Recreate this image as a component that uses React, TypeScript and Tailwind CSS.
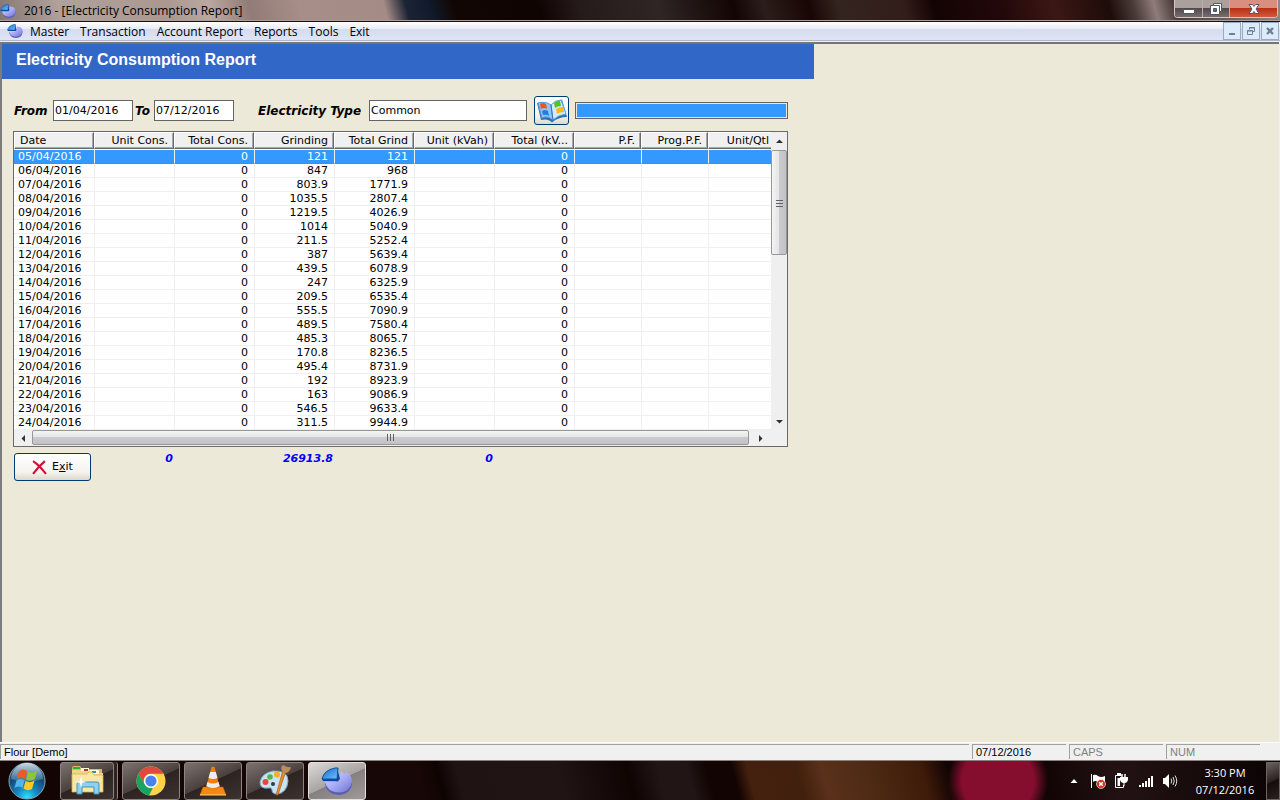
import React, { useState } from 'react';

type Row = [string, string, string];

const rows: Row[] = [
  ['05/04/2016', '121', '121'],
  ['06/04/2016', '847', '968'],
  ['07/04/2016', '803.9', '1771.9'],
  ['08/04/2016', '1035.5', '2807.4'],
  ['09/04/2016', '1219.5', '4026.9'],
  ['10/04/2016', '1014', '5040.9'],
  ['11/04/2016', '211.5', '5252.4'],
  ['12/04/2016', '387', '5639.4'],
  ['13/04/2016', '439.5', '6078.9'],
  ['14/04/2016', '247', '6325.9'],
  ['15/04/2016', '209.5', '6535.4'],
  ['16/04/2016', '555.5', '7090.9'],
  ['17/04/2016', '489.5', '7580.4'],
  ['18/04/2016', '485.3', '8065.7'],
  ['19/04/2016', '170.8', '8236.5'],
  ['20/04/2016', '495.4', '8731.9'],
  ['21/04/2016', '192', '8923.9'],
  ['22/04/2016', '163', '9086.9'],
  ['23/04/2016', '546.5', '9633.4'],
  ['24/04/2016', '311.5', '9944.9'],
];

const columns = [
  'Date',
  'Unit Cons.',
  'Total Cons.',
  'Grinding',
  'Total Grind',
  'Unit (kVah)',
  'Total (kV...',
  'P.F.',
  'Prog.P.F.',
  'Unit/Qtl',
];

const menuItems = ['Master', 'Transaction', 'Account Report', 'Reports', 'Tools', 'Exit'];

const PieIcon = ({ className }: { className: string }) => (
  <svg className={className} viewBox="0 0 32 32" aria-hidden="true">
    <defs>
      <linearGradient id="ball" x1="0" y1="0" x2="1" y2="1">
        <stop offset="0" stopColor="#d6d8ff" />
        <stop offset="0.5" stopColor="#a9adf5" />
        <stop offset="1" stopColor="#6c70cf" />
      </linearGradient>
      <linearGradient id="slice" x1="0" y1="0" x2="1" y2="1">
        <stop offset="0" stopColor="#1668c8" />
        <stop offset="1" stopColor="#6cc4ff" />
      </linearGradient>
    </defs>
    <path d="M21 8 Q31 10 31 19 Q30 29 18 30 Q5 29 4 18 L17 18 Z" fill="#5a5eb4" />
    <path d="M20 6 L24 9 L25 7 Q31 10 31 17 Q29 27 18 27.500 Q6 27 4 17 L17 17 Z" fill="url(#ball)" />
    <path d="M1 14 L2 16 L17 16 L19 14 L16 3 L14 13 Z" fill="#0e4796" />
    <path d="M1 14 Q3 5 14 3 L17 3 L16 14 Z" fill="url(#slice)" stroke="#124f9e" />
  </svg>
);

const BookIcon = () => (
  <svg className="h-6 w-8" viewBox="0 0 32 24" aria-hidden="true">
    <path d="M1 4 L5 21 Q12 19 16 23.500 Q22 18 31 18 L26 0.500 Q18 2 15 6 Q9 2 1 4Z" fill="#2d6fb4" />
    <path d="M2 4 Q10 2 15 6 L17 21 Q11 16 6 19 Z" fill="#8fc6f3" stroke="#4f9be0" />
    <path d="M15 6 Q19 1 25 1 L30 15 Q22 16 17 21 Z" fill="#d3ebfc" stroke="#5aa5e4" />
    <path d="M4 5 Q7 3 10 5 L11 10 Q8 8 5 10Z" fill="#f0541e" />
    <path d="M6 12 Q9 10 12 12 L13 17 Q10 15 7 16Z" fill="#1f7fe0" />
    <path d="M18 4 Q21 1 24 2 L25 7 Q21 7 19 9Z" fill="#56c41c" />
    <path d="M20 10 Q23 8 27 8 L28 13 Q24 13 21 15Z" fill="#fdb813" />
    <path d="M15 6 L17 21" stroke="#3177bd" fill="none" />
  </svg>
);

const StartOrb = () => (
  <svg className="h-[38px] w-[38px]" viewBox="0 0 38 38" aria-hidden="true">
    <defs>
      <radialGradient id="orb" cx="0.5" cy="0.95" r="0.95">
        <stop offset="0" stopColor="#2fe0ff" />
        <stop offset="0.3" stopColor="#1489c4" />
        <stop offset="0.65" stopColor="#124a78" />
        <stop offset="1" stopColor="#24506e" />
      </radialGradient>
      <linearGradient id="orbGloss" x1="0" y1="0" x2="0" y2="1">
        <stop offset="0" stopColor="#e8f3fa" stopOpacity="0.85" />
        <stop offset="1" stopColor="#a5c8dc" stopOpacity="0.25" />
      </linearGradient>
    </defs>
    <circle cx="19" cy="19" r="18" fill="url(#orb)" stroke="#8ba6b6" />
    <path d="M3 17 A16 16 0 0 1 35 17 Q19 22 3 17Z" fill="url(#orbGloss)" />
    <path d="M11 9 Q15 6 19 9 L17 17 Q13 14 9 17Z" fill="#ee5a24" />
    <path d="M20 9.500 Q24 12 29 9 L27 17 Q22 20 18 17.500Z" fill="#8cc63e" />
    <path d="M8.500 18.500 Q12 15.500 16.500 18.500 L14.500 26 Q11 23 6.500 26Z" fill="#53b4ee" />
    <path d="M17.500 19 Q22 21.500 26.500 18.500 L24 27 Q20 29.500 15.500 26.500Z" fill="#ffc928" />
  </svg>
);

const ExplorerIcon = () => (
  <svg className="h-8 w-9" viewBox="0 0 36 32" aria-hidden="true">
    <path d="M3 3 Q3 1 5 1 H11 L13 4 H33 V24 H3Z" fill="#dcb95a" />
    <path d="M4 2 H11 V4 H4Z" fill="#1eb53a" />
    <path d="M3 5 H29 V8 H34 V27 H3Z" fill="#f0d582" />
    <path d="M12 3 H20 V6 H12Z" fill="#fff8dd" />
    <path d="M15 4 H19 V6 H15Z" fill="#c63222" />
    <path d="M21 5 H30 V9 H21Z" fill="#fff8dd" />
    <path d="M23 6 H27 V8 H23Z" fill="#1c8fd8" />
    <path d="M3 9 H18 L20 7 H23 L25 10 H34 V27 H3Z" fill="#f8e7a4" stroke="#d5b455" strokeWidth="0.800" />
    <path d="M8 29 V19 Q8 17 10 17 H28 Q30 17 30 19 V29 H25 V22 H13 V29Z" fill="#8fd0ee" stroke="#3f93c4" />
    <path d="M12 11 L13 16 L18 17 L13 18 L12 23 L11 18 L6 17 L11 16Z" fill="#fff" />
  </svg>
);

const ChromeIcon = () => (
  <svg className="h-[30px] w-[30px]" viewBox="0 0 30 30" aria-hidden="true">
    <circle cx="15" cy="15" r="14.500" fill="#ffd24a" />
    <path d="M2.400 7.800 A14.500 14.500 0 0 1 27.600 7.800 H15 A7 7 0 0 0 8.800 18.500Z" fill="#de4b3c" />
    <path d="M2.400 7.800 L8.900 18.600 A7 7 0 0 0 17 21.700 L13 29.400 A14.500 14.500 0 0 1 2.400 7.800Z" fill="#1ca261" />
    <circle cx="15" cy="15" r="7" fill="#fff" />
    <circle cx="15" cy="15" r="5.600" fill="#4a80f0" />
  </svg>
);

const VlcIcon = () => (
  <svg className="h-[30px] w-[28px]" viewBox="0 0 28 30" aria-hidden="true">
    <path d="M4 21 H24 L27 29 H1Z" fill="#f58a12" stroke="#c85f00" strokeWidth="0.600" />
    <path d="M12.500 1 Q14 0 15.500 1 L21 22 Q14 27 7 22Z" fill="#f47b0c" />
    <path d="M11.200 6 H16.800 L18.500 12 Q14 14 9.500 12Z" fill="#e9edf2" />
    <path d="M8.500 16 Q14 19 19.500 16 L20.700 20 Q14 24 7.300 20Z" fill="#e9edf2" />
    <path d="M1 28 H27 V29.500 H1Z" fill="#ffae45" />
  </svg>
);

const PaintIcon = () => (
  <svg className="h-8 w-8" viewBox="0 0 32 32" aria-hidden="true">
    <path
      d="M14 6 Q29 5 29 16 Q28 28 18 29 Q13 29 13 25 Q13 22 9 23 Q1 24 1 17 Q3 8 14 6Z"
      fill="#c9e2f4"
      stroke="#7fa9c8"
    />
    <circle cx="6.500" cy="17" r="3" fill="#e3483c" />
    <circle cx="11" cy="12" r="2.800" fill="#4db848" />
    <circle cx="18" cy="9.500" r="3" fill="#f5b120" />
    <circle cx="14" cy="19" r="2" fill="#26404f" />
    <path d="M27 6 L19 30 L17 30 L24 5Z" fill="#e08a28" stroke="#a75c12" strokeWidth="0.600" />
    <path d="M23 6 Q21 2 24 0 Q29 3 32 2 Q31 7 27 8Z" fill="#b98d5c" />
  </svg>
);

const Arrow = ({ d }: { d: string }) => (
  <svg className="h-[7px] w-[7px]" viewBox="0 0 7 7" aria-hidden="true">
    <path d={d} fill="#303030" />
  </svg>
);

const TitleBar = () => (
  <div className="flex h-[22px] shrink-0 items-start border-b border-[#1c1010] bg-[linear-gradient(75deg,#857773_0px,#b0a19b_60px,#ab9890_167px,#bba89f_206px,#927c77_244px,#a78e88_293px,#a58b86_375px,#1b2434_396px,#101b2c_418px,#120604_442px,#100403_524px,#251b1a_563px,#2e2524_640px,#130503_712px,#2b1d1b_742px,#180604_785px,#34241f_814px,#321d1a_877px,#130403_906px,#22080a_969px,#3b1714_1022px,#1d0c09_1075px,#4b3b39_1099px,#8e7d7a_1119px,#4a3c3a_1138px,#938583_1240px)] shadow-[inset_0_-1px_0_#a99c99]">
    <div className="flex h-[21px] min-w-0 flex-1 items-center">
      <PieIcon className="h-4 w-4 shrink-0" />
      <h1 className="ml-2 text-[12px] whitespace-nowrap text-black">2016 - [Electricity Consumption Report]</h1>
    </div>
    <div className="mr-[2px] flex h-[18px] shrink-0 overflow-hidden rounded-b-[4px] border border-t-0 border-[#d0c8c6] bg-[#2b2321]">
      <button
        aria-label="Minimize"
        className="flex w-[28px] items-center justify-center border-r border-[#b9b1af] bg-[linear-gradient(#aaa19f_0_45%,#50464a_45%,#776d6b)]"
      >
        <svg className="h-3 w-3" viewBox="0 0 12 12">
          <path d="M0.500 6.500 h11 v4 h-11z" fill="#fff" stroke="#50546e" />
        </svg>
      </button>
      <button
        aria-label="Restore"
        className="flex w-[27px] items-center justify-center border-r border-[#b9b1af] bg-[linear-gradient(#aaa19f_0_45%,#50464a_45%,#776d6b)]"
      >
        <svg className="h-3 w-3" viewBox="0 0 12 12">
          <path d="M3.500 0.500 h8 v8 h-2 v3 h-9 v-9 h3z" fill="#fff" stroke="#50546e" />
          <path d="M3.500 5.500 h3 v3 h-3z" fill="#6d6468" stroke="#50546e" />
          <path d="M3 2.500 h6.500 v6" fill="none" stroke="#50546e" />
        </svg>
      </button>
      <button
        aria-label="Close"
        className="flex w-[47px] items-center justify-center bg-[linear-gradient(#d88f80_0_45%,#b52d12_45%,#d5583a)]"
      >
        <svg className="h-3 w-3" viewBox="0 0 12 12">
          <path
            d="M1 1.500 h3.500 L6 3.500 7.500 1.500 H11 L8 6 11 10.500 H7.500 L6 8.500 4.500 10.500 H1 L4 6Z"
            fill="#fff"
            stroke="#50546e"
          />
        </svg>
      </button>
    </div>
  </div>
);

const childButton =
  'flex h-[18px] w-[18px] items-center justify-center border border-[#9aabc0] bg-[#dcebfa]';

const MenuBar = () => (
  <nav className="flex h-[19px] shrink-0 items-center border-b border-[#b0b6cc] bg-[linear-gradient(#ffffff,#e8ebf5_7px,#d5dcef_7px,#dfe4f6)]">
    <PieIcon className="ml-[7px] h-4 w-4 shrink-0" />
    <ul className="ml-[2px] flex flex-1 pt-[2px] text-[12px] leading-4 text-black">
      {menuItems.map((item) => (
        <li key={item}>
          <button className="pr-[6px] pl-[5px] whitespace-nowrap">{item}</button>
        </li>
      ))}
    </ul>
    <div className="mr-px flex gap-px">
      <button aria-label="Minimize child window" className={childButton}>
        <svg className="h-2 w-2" viewBox="0 0 8 8">
          <path d="M1 6 h6 v2 h-6z" fill="#6f8295" />
        </svg>
      </button>
      <button aria-label="Restore child window" className={childButton}>
        <svg className="h-2 w-2" viewBox="0 0 8 8">
          <path d="M2.500 2.500 V0.500 H7.500 V4.500 H6 M0.500 3.500 h5 v4 h-5z M2 1 h6 M0 4 h6" fill="none" stroke="#6f8295" />
        </svg>
      </button>
      <button aria-label="Close child window" className={childButton}>
        <svg className="h-2 w-2" viewBox="0 0 8 8">
          <path d="M1 1 L7 7 M7 1 L1 7" stroke="#6f8295" strokeWidth="2.400" />
        </svg>
      </button>
    </div>
  </nav>
);

const ReportTable = () => {
  const [selected, setSelected] = useState(0);

  return (
    <div className="w-[775px] max-w-full border border-[#696969] bg-[#f0f0f0] text-[11px] text-black">
      <div className="flex">
        <div className="min-w-0 flex-1 overflow-hidden bg-white">
          <table className="w-[761px] table-fixed border-separate border-spacing-0">
            <colgroup>
              {columns.map((name, i) => (
                <col key={name} className={i < 7 ? 'w-[80px]' : 'w-[67px]'} />
              ))}
            </colgroup>
            <thead>
              <tr>
                {columns.map((name, i) => (
                  <th key={name} className="h-[18px] p-0 align-top font-normal">
                    <span
                      className={`block h-[17px] overflow-hidden border-t border-r border-b border-l border-t-white border-r-[#696969] border-b-[#696969] border-l-white bg-[#f0f0f0] leading-[16px] whitespace-nowrap shadow-[inset_-1px_-1px_0_#a8a8a8] ${
                        i === 0 ? 'pl-[5px] text-left' : 'pr-[5px] text-right'
                      }`}
                    >
                      {name}
                    </span>
                  </th>
                ))}
              </tr>
            </thead>
            <tbody>
              {rows.map(([date, grinding, total], r) => {
                const cells = [date, '', '0', grinding, total, '', '0', '', '', ''];
                return (
                  <tr
                    key={date}
                    onClick={() => setSelected(r)}
                    className={r === selected ? 'bg-[#3399ff] text-white' : 'bg-white'}
                  >
                    {cells.map((cell, i) => (
                      <td
                        key={columns[i]}
                        className={`h-[14px] border-b py-0 leading-[13px] ${
                          r === selected ? 'border-b-[#c8642e] [border-bottom-style:dotted]' : 'border-b-[#f0f0f0]'
                        } ${
                          i === 0 ? 'pr-0 pl-1 text-left' : 'border-l border-l-[#f0f0f0] pr-[6px] pl-0 text-right'
                        }`}
                      >
                        {cell}
                      </td>
                    ))}
                  </tr>
                );
              })}
            </tbody>
          </table>
        </div>
        <div className="flex w-4 shrink-0 flex-col bg-[#efefef]">
          <button aria-label="Scroll up" className="flex h-[18px] items-center justify-center">
            <Arrow d="M0 5 L3.500 1.500 L7 5Z" />
          </button>
          <div className="flex h-[105px] items-center justify-center rounded-[2px] border border-[#979797] bg-[linear-gradient(90deg,#f4f4f4,#e4e4e5_50%,#cbcbcd_50%,#c2c2c5)]">
            <svg className="h-[8px] w-[7px]" viewBox="0 0 7 8">
              <path d="M0 1.500 h7 M0 4.500 h7 M0 7.500 h7" stroke="#606060" />
            </svg>
          </div>
          <div className="flex-1" />
          <button aria-label="Scroll down" className="flex h-[18px] items-center justify-center">
            <Arrow d="M0 2 L3.500 5.500 L7 2Z" />
          </button>
        </div>
      </div>
      <div className="flex h-4 items-stretch pr-4">
        <button aria-label="Scroll left" className="flex w-[18px] items-center justify-center">
          <Arrow d="M5 0 L1.500 3.500 L5 7Z" />
        </button>
        <div className="mb-px flex flex-1 items-center justify-center rounded-[2px] border border-[#979797] bg-[linear-gradient(#f4f4f4,#e4e4e5_50%,#cbcbcd_50%,#c2c2c5)]">
          <svg className="h-[7px] w-[8px]" viewBox="0 0 8 7">
            <path d="M0.500 0 v7 M3.500 0 v7 M6.500 0 v7" stroke="#606060" />
          </svg>
        </div>
        <button aria-label="Scroll right" className="flex w-[22px] items-center justify-center">
          <Arrow d="M2 0 L5.500 3.500 L2 7Z" />
        </button>
      </div>
    </div>
  );
};

const field = 'h-[21px] border border-[#646464] bg-white text-[11px] text-black outline-none';
const label = 'text-[12px] font-bold italic whitespace-nowrap text-black';
const total = 'text-right text-[11px] leading-[11px] font-bold italic text-[#0000ff]';

const ReportForm = () => (
  <main className="min-h-0 flex-1 overflow-hidden border-t-2 border-l-2 border-t-[#757575] border-l-[#7c7c7c] bg-[#ece9d8] font-['DejaVu_Sans',Verdana,sans-serif]">
    <h2 className="h-[35px] w-[812px] max-w-full bg-[#3168c8] pl-[14px] font-['Liberation_Sans',Arial,sans-serif] text-[16px] leading-8 font-bold text-white">
      Electricity Consumption Report
    </h2>
    <div className="flex flex-col items-start gap-[6px] pt-[17px] pl-[11px]">
      <form className="flex items-center pl-px" onSubmit={(e) => e.preventDefault()}>
        <label htmlFor="from" className={`w-[39px] ${label}`}>
          From
        </label>
        <input id="from" defaultValue="01/04/2016" className={`w-[80px] pl-px ${field}`} />
        <label htmlFor="to" className={`w-[21px] pl-[2px] ${label}`}>
          To
        </label>
        <input id="to" defaultValue="07/12/2016" className={`w-[80px] pl-px ${field}`} />
        <label htmlFor="type" className={`ml-6 w-[111px] ${label}`}>
          Electricity Type
        </label>
        <input id="type" defaultValue="Common" className={`w-[158px] pl-px ${field}`} />
        <button
          aria-label="Show report"
          className="ml-[7px] flex h-[29px] w-[35px] items-center justify-center rounded-[3px] border border-[#003c74] bg-[linear-gradient(#ffffff,#f4f3ee_70%,#dcd8cc)]"
        >
          <BookIcon />
        </button>
        <div className="ml-[6px] h-[17px] w-[213px] border border-[#646464] bg-[#ece9d8] p-px">
          <div className="h-full bg-[#3399ff]" />
        </div>
      </form>
      <ReportTable />
      <div className="flex items-start pl-px">
        <button className="flex h-[28px] w-[77px] items-center justify-center gap-[5px] rounded-[3px] border border-[#003c74] bg-[linear-gradient(#ffffff,#f4f3ee_70%,#dcd8cc)] text-[11px] text-black">
          <svg className="h-[15px] w-[15px]" viewBox="0 0 14 14" aria-hidden="true">
            <path d="M1 1 Q7 5 13 13 M12 1 Q6 6 1 13" fill="none" stroke="#d0103a" strokeWidth="2" />
          </svg>
          <span>
            E<u>x</u>it
          </span>
        </button>
        <output className={`w-[82px] ${total}`}>0</output>
        <output className={`w-[160px] ${total}`}>26913.8</output>
        <output className={`w-[160px] ${total}`}>0</output>
      </div>
    </div>
  </main>
);

const pane = 'h-[15px] border-t border-l border-[#a0a0a0] pl-[3px] leading-[14px] whitespace-nowrap';

const StatusBar = () => (
  <footer className="flex h-[18px] shrink-0 items-end gap-[3px] border-t border-[#fafafa] bg-[#f0f0f0] pr-5 pb-px font-['Liberation_Sans',Arial,sans-serif] text-[11px] text-black">
    <div className={`min-w-0 flex-1 ${pane}`}>Flour [Demo]</div>
    <div className={`w-[94px] ${pane}`}>07/12/2016</div>
    <div className={`w-[94px] text-[#808080] ${pane}`}>CAPS</div>
    <div className={`w-[94px] text-[#808080] ${pane}`}>NUM</div>
  </footer>
);

const task =
  'flex h-[38px] w-[58px] items-center justify-center rounded-[3px] border border-[#8d8381] bg-[linear-gradient(155deg,#7c7371,#4a403e_50%,#2d2321_51%,#3c3230)]';

const TaskBar = () => (
  <div className="flex h-10 shrink-0 items-center border-t border-[#8a8280] bg-[radial-gradient(circle_at_998px_20px,#850d2e_0px,#850d2e_36px,transparent_50px),linear-gradient(75deg,#120504_0px,#170807_411px,#0f0302_430px,#1f1413_449px,#201514_546px,#100403_614px,#211615_643px,#211615_672px,#110403_691px,#110403_715px,#45200e_730px,#41200d_778px,#5a311b_802px,#4b2812_855px,#3e1a09_899px,#130505_923px,#130505_1019px,#221213_1087px,#0b0304_1241px)] font-['Open_Sans','Segoe_UI',sans-serif]">
    <button aria-label="Start" className="ml-2">
      <StartOrb />
    </button>
    <div className="ml-[14px] flex flex-1 gap-1">
      <button aria-label="Windows Explorer" className="flex h-[38px] w-[58px] rounded-[3px] border-r border-[#8d8381] bg-[#2d2321] pr-[3px]">
        <span className="flex h-full flex-1 items-center justify-center rounded-[3px] border border-[#8d8381] bg-[linear-gradient(155deg,#7c7371,#4a403e_50%,#2d2321_51%,#3c3230)]">
          <ExplorerIcon />
        </span>
      </button>
      <button aria-label="Google Chrome" className={task}>
        <ChromeIcon />
      </button>
      <button aria-label="VLC media player" className={task}>
        <VlcIcon />
      </button>
      <button aria-label="Paint" className={task}>
        <PaintIcon />
      </button>
      <button
        aria-label="Electricity Consumption Report"
        className="flex h-[38px] w-[58px] items-center justify-center rounded-[3px] border border-[#e2dfde] bg-[linear-gradient(155deg,#dcd9d8,#a9a4a3_50%,#858080_51%,#a09b9a)]"
      >
        <PieIcon className="h-8 w-8" />
      </button>
    </div>
    <div className="flex items-center gap-2">
      <button aria-label="Show hidden icons" className="mr-1">
        <svg className="h-2 w-2" viewBox="0 0 8 8">
          <path d="M0.500 6 L4 2 L7.500 6Z" fill="#fff" />
        </svg>
      </button>
      <svg className="h-4 w-4" viewBox="0 0 16 16" aria-hidden="true">
        <path d="M1.500 1 V15" stroke="#fff" />
        <path d="M3 2 Q6 1 8 3 Q11 5 15 3 V9 Q10 11 8 9 Q5 7 3 9Z" fill="#fff" />
        <circle cx="11" cy="11" r="4.500" fill="#d4301f" stroke="#fff" strokeWidth="0.600" />
        <path d="M9.200 9.200 L12.800 12.800 M12.800 9.200 L9.200 12.800" stroke="#fff" strokeWidth="1.500" />
      </svg>
      <svg className="h-4 w-4" viewBox="0 0 16 16" aria-hidden="true">
        <path d="M7.500 2.500 H1.500 V14.500 H9.500 V12" fill="none" stroke="#fff" />
        <path d="M3 0 H7 V2 H3Z M3.500 5 H6 V13 H3.500Z" fill="#fff" />
        <path d="M8 1 V4 M11 1 V4" stroke="#fff" strokeWidth="1.500" />
        <path d="M6 4 H14 V7 Q13 10 10.500 10 H9.500 Q7 10 6 7Z" fill="#fff" />
        <path d="M10 9 V13" stroke="#fff" />
      </svg>
      <svg className="h-4 w-4" viewBox="0 0 16 16" aria-hidden="true">
        <path d="M1 12 h2 v2 h-2z M4 10 h2 v4 h-2z M7 8 h2 v6 h-2z M10 5 h2 v9 h-2z M13 3 h2 v11 h-2z" fill="#fff" />
      </svg>
      <svg className="h-4 w-4" viewBox="0 0 16 16" aria-hidden="true">
        <path d="M1 5 H3 L7 1 V15 L3 11 H1Z" fill="#fff" />
        <path d="M9 5.500 Q10.500 8 9 10.500 M11 4 Q13.500 8 11 12 M13 2.500 Q16.500 8 13 13.500" fill="none" stroke="#ddd" />
      </svg>
    </div>
    <div className="ml-4 w-[62px] text-center text-[11px] leading-[17px] text-white">
      <div>3:30 PM</div>
      <div>07/12/2016</div>
    </div>
    <button
      aria-label="Show desktop"
      className="ml-[10px] h-[38px] w-[14px] border border-[#6d6462] bg-[linear-gradient(155deg,#6b6361,#2a201f_50%,#150b0b_51%,#2a2120)]"
    />
  </div>
);

const App: React.FC = () => {
  return (
    <div className="flex h-screen min-h-[520px] flex-col bg-[#f0f0f0] font-['Open_Sans','Segoe_UI',sans-serif]">
      <TitleBar />
      <MenuBar />
      <div className="flex min-h-0 flex-1 flex-col pt-px pr-px">
        <ReportForm />
      </div>
      <StatusBar />
      <TaskBar />
    </div>
  );
};

export default App;
